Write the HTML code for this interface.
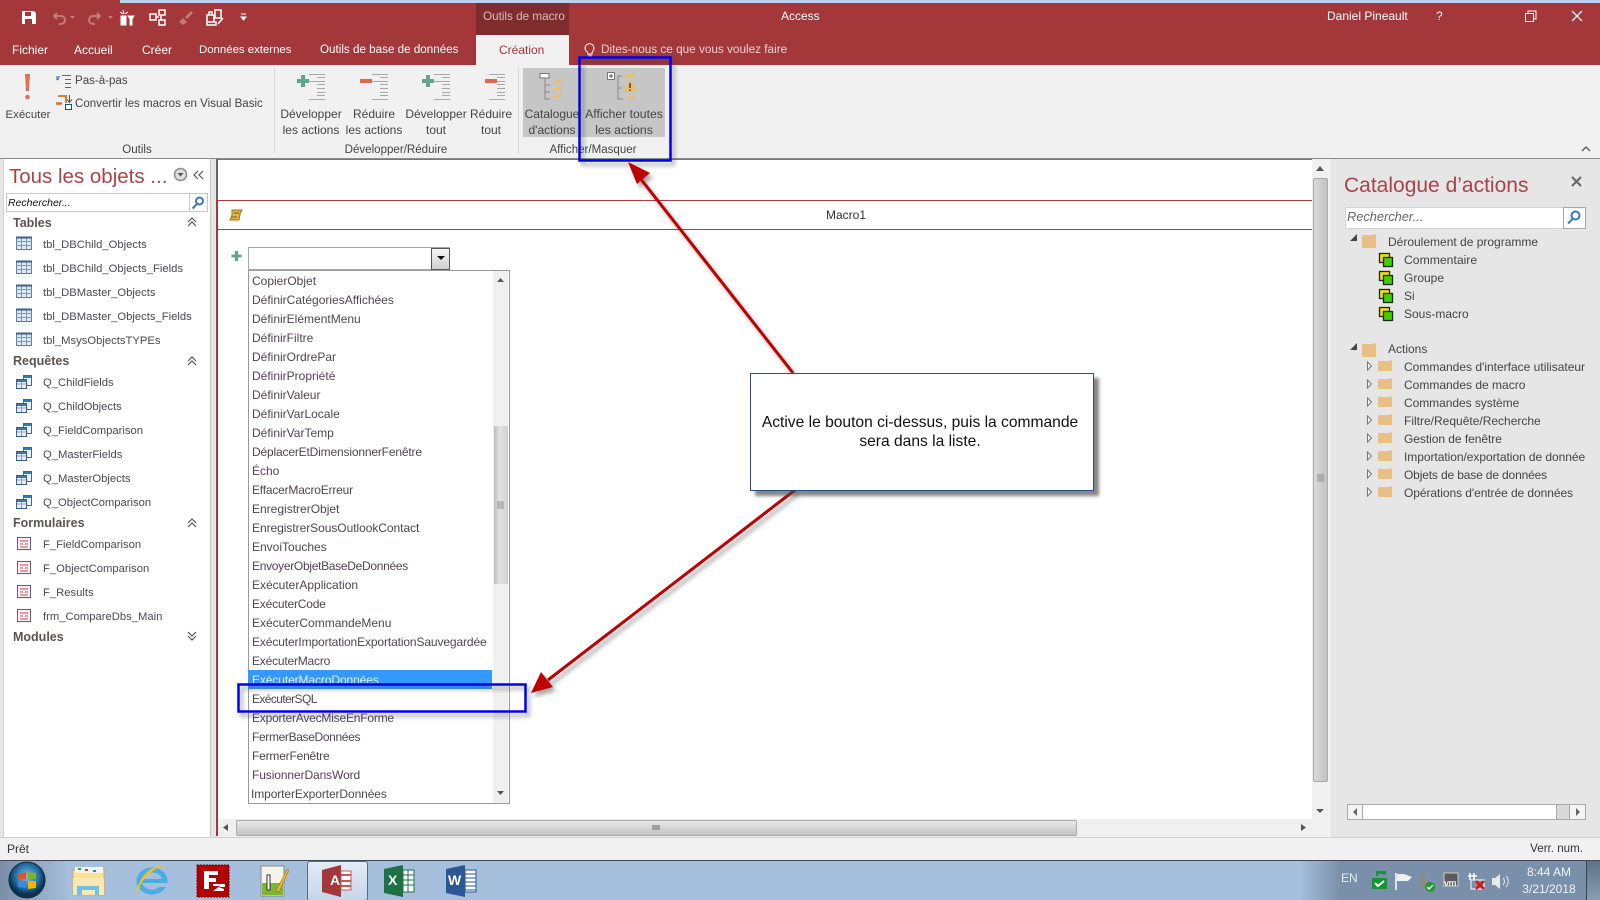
<!DOCTYPE html>
<html lang="fr"><head><meta charset="utf-8"><title>Access</title>
<style>
html,body{margin:0;padding:0;width:1600px;height:900px;overflow:hidden;background:#e6e6e6}
body{position:relative;font:12px/16px "Liberation Sans",sans-serif;color:#444}
.b{position:absolute;display:block}
.t{position:absolute;white-space:nowrap;line-height:16px;display:block}
.c{transform:translateX(-50%);text-align:center}
.w{color:#fff}
.g{font-size:11.55px;margin-top:1px}
.h{font-weight:bold;font-size:12.5px;color:#5c5452}
.n{color:#4a4a52;font-size:11.25px;margin-top:1px}
.l{left:252px;color:#4f4650}
svg{position:absolute;display:block;overflow:visible}
</style></head><body>
<!-- title bar -->
<div class="b" style="left:0;top:0;width:1600px;height:65px;background:#a4373a"></div>
<div class="b" style="left:120px;top:0;width:1480px;height:3px;background:#bcd2ea"></div>
<div class="b" style="left:476px;top:3px;width:93px;height:32px;background:#7f2c2f"></div>
<div class="b" style="left:476px;top:35px;width:93px;height:30px;background:#f1f1f1"></div>
<svg style="left:0;top:0" width="260" height="34" fill="none">
<path d="M22 11h12l2 2v11H22z" fill="#fff"/><path d="M25 12h6v4h-6zM25 19h7v5h-7z" fill="#a4373a"/>
<path d="M57 13l-3 3 3 3M54 16h7a4 4 0 0 1 0 8h-2" stroke="#c47a7c" stroke-width="2"/><path d="M70 16h5l-2.500 3z" fill="#c47a7c"/>
<path d="M97 13l3 3-3 3M100 16h-7a4 4 0 0 0 0 8h2" stroke="#c47a7c" stroke-width="2"/><path d="M108 16h5l-2.500 3z" fill="#c47a7c"/>
<path d="M121 16h5v9h-5zM128 16h6l-2 3v6h-2v-6zM123 10l1 4M120 12l3 2M128 12l-3 2" stroke="#fff" fill="#fff"/>
<path d="M150 14h6v6h-6zM159 10h6v5h-6zM159 20h6v5h-6zM156 17h3M161 15v5" stroke="#fff" stroke-width="1.500"/>
<path d="M179 22l4-4 4 4-4 3zM185 17l6-6 2 2-6 6z" fill="#c47a7c"/>
<path d="M207 15h7v7h-7zM209 15v-3h3v3M215 10h6v8h-6zM207 22h9v3h-9zM218 24l5-6" stroke="#fff" stroke-width="1.500"/>
<path d="M241 14h5M241 17h5l-2.500 3z" stroke="#fff" fill="#fff"/>
</svg>
<span class="t w" style="left:12px;top:42px">Fichier</span>
<span class="t w" style="left:74px;top:42px">Accueil</span>
<span class="t w" style="left:142px;top:42px">Créer</span>
<span class="t w" style="left:199px;top:42px;font-size:11.4px">Données externes</span>
<span class="t w" style="left:320px;top:42px;font-size:11.65px">Outils de base de données</span>
<span class="t" style="left:499px;top:42px;color:#a4373a">Création</span>
<span class="t" style="left:601px;top:42px;color:#edd3d4;font-size:11.75px">Dites-nous ce que vous voulez faire</span>
<svg style="left:583px;top:42px" width="14" height="16" fill="none" stroke="#f4e2e2" stroke-width="1.200"><path d="M3 9a4.500 4.500 0 1 1 7 0c-1 1-1 2-1 3H5c0-1 0-2-2-3zM5 14h4"/></svg>
<span class="t" style="left:483px;top:9px;color:#dcbcbd;font-size:11.7px">Outils de macro</span>
<span class="t w" style="left:781px;top:8px">Access</span>
<span class="t w" style="left:1327px;top:8px">Daniel Pineault</span>
<span class="t w" style="left:1436px;top:8px">?</span>
<svg style="left:1518px;top:8px" width="70" height="16" fill="none" stroke="#fff"><path d="M7.500 5.500h8v8h-8zM10 5V3h8v8h-2"/><path d="M54 3l10 10M64 3L54 13" stroke-width="1.300"/></svg>
<!-- ribbon -->
<div class="b" style="left:0;top:65px;width:1600px;height:93px;background:#f1f1f1"></div>
<div class="b" style="left:0;top:158px;width:1600px;height:1px;background:#8c8c8c"></div>
<div class="b" style="left:274px;top:68px;width:1px;height:85px;background:#d8d8d8"></div>
<div class="b" style="left:518px;top:68px;width:1px;height:85px;background:#d8d8d8"></div>
<div class="b" style="left:523px;top:68px;width:142px;height:69px;background:#c6c6c6"></div>
<svg style="left:0;top:65px" width="700" height="50" fill="none">
<path d="M25 9h5l-1 17h-3z" fill="#e0705a"/><circle cx="27.500" cy="32" r="2.300" fill="#e0705a"/>
<path d="M62 10.500h9M65 14.500h6M65 18.500h6M65 22.500h6" stroke="#666"/><path d="M60 12h-3v3M57 15l2-1.500" stroke="#3a78c4" stroke-width="1.300"/>
<path d="M58 31h8v7" stroke="#d9701e" stroke-width="1.800"/><path d="M56 38.500h6" stroke="#d9701e" stroke-width="2.500"/><path d="M69.500 30v7M67 34.500l2.500 3 2.500-3" stroke="#555"/><rect x="65.500" y="39.500" width="6" height="5" fill="#fff" stroke="#1f4e79"/>
<g stroke="#a8a8a8"><path d="M309 9.500h16M317 12.500h8M309 16.500h16M317 19.500h8M317 23.500h8M317 27.500h8M317 30.500h8M309 34.500h16"/><path d="M372 9.500h16M380 12.500h8M372 16.500h16M380 19.500h8M380 23.500h8M380 27.500h8M380 30.500h8M372 34.500h16"/><path d="M434 9.500h16M442 12.500h8M434 16.500h16M442 19.500h8M442 23.500h8M442 27.500h8M442 30.500h8M434 34.500h16"/><path d="M489 9.500h16M497 12.500h8M489 16.500h16M497 19.500h8M497 23.500h8M497 27.500h8M497 30.500h8M489 34.500h16"/></g>
<path d="M309 16h-12M303 10v12" stroke="#5fa78e" stroke-width="4"/><path d="M434 16h-12M428 10v12" stroke="#5fa78e" stroke-width="4"/>
<path d="M372 16h-12M497 16h-12" stroke="#de6a4b" stroke-width="4"/>
<rect x="540" y="8.500" width="9" height="4.500" fill="#fff" stroke="#777"/><path d="M545 13v21h5M545 20h5M545 27h5" stroke="#888"/>
<path d="M551 18l12-4-4 5zM551 25l12-4-4 5zM551 32l12-4-4 5z" fill="#edbe6a"/>
<rect x="607.500" y="7.500" width="7" height="7" fill="#fff" stroke="#777"/><path d="M609 11h4M611 9v4" stroke="#555"/>
<path d="M618 11h4M618 11v23h5M618 23h4" stroke="#888"/><path d="M623 12l13-5-4 5zM623 35l13-5-4 5z" fill="#edbe6a"/>
<path d="M630 14l8 13h-15z" fill="#edbe6a"/><path d="M630 18v5M630 24.500v1.500" stroke="#444" stroke-width="1.500"/>
</svg>
<span class="t c" style="left:28px;top:107px;font-size:11.4px">Exécuter</span>
<span class="t g" style="left:75px;top:72px">Pas-à-pas</span>
<span class="t g" style="left:75px;top:95px">Convertir les macros en Visual Basic</span>
<span class="t c" style="left:311px;top:106px">Développer<br>les actions</span>
<span class="t c" style="left:374px;top:106px">Réduire<br>les actions</span>
<span class="t c" style="left:436px;top:106px">Développer<br>tout</span>
<span class="t c" style="left:491px;top:106px">Réduire<br>tout</span>
<span class="t c" style="left:552px;top:106px">Catalogue<br>d'actions</span>
<span class="t c" style="left:624px;top:106px;font-size:12.2px">Afficher toutes<br>les actions</span>
<span class="t c g" style="left:137px;top:141px">Outils</span>
<span class="t c g" style="left:396px;top:141px">Développer/Réduire</span>
<span class="t c g" style="left:593px;top:141px">Afficher/Masquer</span>
<svg style="left:1580px;top:145px" width="12" height="8" fill="none" stroke="#555" stroke-width="1.300"><path d="M2 6l4-4 4 4"/></svg>
<!-- nav pane -->
<div class="b" style="left:3px;top:159px;width:206px;height:678px;background:#fff;border-right:1px solid #c6c6c6;border-left:1px solid #d4d4d4"></div>
<span class="t" style="left:9px;top:164px;font-size:20.5px;line-height:26px;color:#a8444a">Tous les objets ...</span>
<svg style="left:173px;top:167px" width="36" height="16" fill="none"><circle cx="7.500" cy="7.500" r="6" fill="#ddd" stroke="#8a8a8a" stroke-width="1.500"/><path d="M4.500 6h6l-3 3.500z" fill="#555"/><path d="M25 4l-4 4 4 4M30 4l-4 4 4 4" stroke="#555" stroke-width="1.200"/></svg>
<div class="b" style="left:6px;top:193px;width:200px;height:17px;border:1px solid #c8c8c8;background:#fff"></div>
<div class="b" style="left:189px;top:193px;width:1px;height:19px;background:#c8c8c8"></div>
<span class="t" style="left:8px;top:195px;font-style:italic;color:#111;font-size:10.5px">Rechercher...</span>
<svg style="left:191px;top:196px" width="14" height="14" fill="none" stroke="#3c78b8" stroke-width="2"><circle cx="8.500" cy="5" r="3.500"/><path d="M6 8l-4.500 4.500"/></svg>
<span class="t h" style="left:13px;top:215px">Tables</span>
<span class="t h" style="left:13px;top:353px">Requêtes</span>
<span class="t h" style="left:13px;top:515px">Formulaires</span>
<span class="t h" style="left:13px;top:629px">Modules</span>
<svg style="left:186px;top:216px" width="12" height="440" fill="none" stroke="#555" stroke-width="1.200">
<path d="M2 6l4-4 4 4M2 10l4-4 4 4"/><path d="M2 145l4-4 4 4M2 149l4-4 4 4"/><path d="M2 307l4-4 4 4M2 311l4-4 4 4"/><path d="M2 420l4 4 4-4M2 416l4 4 4-4"/>
</svg>
<span class="t n" style="left:43px;top:236px">tbl_DBChild_Objects</span>
<span class="t n" style="left:43px;top:260px">tbl_DBChild_Objects_Fields</span>
<span class="t n" style="left:43px;top:284px">tbl_DBMaster_Objects</span>
<span class="t n" style="left:43px;top:308px">tbl_DBMaster_Objects_Fields</span>
<span class="t n" style="left:43px;top:332px">tbl_MsysObjectsTYPEs</span>
<span class="t n" style="left:43px;top:374px">Q_ChildFields</span>
<span class="t n" style="left:43px;top:398px">Q_ChildObjects</span>
<span class="t n" style="left:43px;top:422px">Q_FieldComparison</span>
<span class="t n" style="left:43px;top:446px">Q_MasterFields</span>
<span class="t n" style="left:43px;top:470px">Q_MasterObjects</span>
<span class="t n" style="left:43px;top:494px">Q_ObjectComparison</span>
<span class="t n" style="left:43px;top:536px">F_FieldComparison</span>
<span class="t n" style="left:43px;top:560px">F_ObjectComparison</span>
<span class="t n" style="left:43px;top:584px">F_Results</span>
<span class="t n" style="left:43px;top:608px">frm_CompareDbs_Main</span>
<svg style="left:0;top:0" width="40" height="640" fill="none">
<g stroke="#7f9cc0"><rect x="16.500" y="237.500" width="15" height="12" fill="#dbe5f1" stroke="#5d7ea8"/><path d="M16 241.500h16M16 245.500h16M21.500 238v11M26.500 238v11"/><rect x="16.500" y="261.500" width="15" height="12" fill="#dbe5f1" stroke="#5d7ea8"/><path d="M16 265.500h16M16 269.500h16M21.500 262v11M26.500 262v11"/><rect x="16.500" y="285.500" width="15" height="12" fill="#dbe5f1" stroke="#5d7ea8"/><path d="M16 289.500h16M16 293.500h16M21.500 286v11M26.500 286v11"/><rect x="16.500" y="309.500" width="15" height="12" fill="#dbe5f1" stroke="#5d7ea8"/><path d="M16 313.500h16M16 317.500h16M21.500 310v11M26.500 310v11"/><rect x="16.500" y="333.500" width="15" height="12" fill="#dbe5f1" stroke="#5d7ea8"/><path d="M16 337.500h16M16 341.500h16M21.500 334v11M26.500 334v11"/></g>
<path d="M16 237.500h16M16 261.500h16M16 285.500h16M16 309.500h16M16 333.500h16" stroke="#3f5f8f" stroke-width="2"/>
<g stroke="#2f6f8f" fill="#e6f0f6"><path d="M23.500 375.500h8v10h-8z"/><path d="M16.500 379.500h10v9h-10z" stroke="#3b5f85"/><path d="M23.500 399.500h8v10h-8z"/><path d="M16.500 403.500h10v9h-10z" stroke="#3b5f85"/><path d="M23.500 423.500h8v10h-8z"/><path d="M16.500 427.500h10v9h-10z" stroke="#3b5f85"/><path d="M23.500 447.500h8v10h-8z"/><path d="M16.500 451.500h10v9h-10z" stroke="#3b5f85"/><path d="M23.500 471.500h8v10h-8z"/><path d="M16.500 475.500h10v9h-10z" stroke="#3b5f85"/><path d="M23.500 495.500h8v10h-8z"/><path d="M16.500 499.500h10v9h-10z" stroke="#3b5f85"/></g>
<path d="M24 377h7M17 381h9M24 401h7M17 405h9M24 425h7M17 429h9M24 449h7M17 453h9M24 473h7M17 477h9M24 497h7M17 501h9" stroke="#2f7f9f" stroke-width="2"/>
<path d="M17 384h9M21.500 382v6M17 408h9M21.500 406v6M17 432h9M21.500 430v6M17 456h9M21.500 454v6M17 480h9M21.500 478v6M17 504h9M21.500 502v6" stroke="#8aa4c0"/>
<g fill="#fdf3f3" stroke="#8a4a6a"><rect x="17.500" y="537.500" width="13" height="12"/><rect x="17.500" y="561.500" width="13" height="12"/><rect x="17.500" y="585.500" width="13" height="12"/><rect x="17.500" y="609.500" width="13" height="12"/></g>
<g stroke="#c04a5a"><path d="M20 541h8M20 544h3M25 544h3M20 547h8M20 565h8M20 568h3M25 568h3M20 571h8M20 589h8M20 592h3M25 592h3M20 595h8M20 613h8M20 616h3M25 616h3M20 619h8"/></g>
</svg>
<!-- document area -->
<div class="b" style="left:216px;top:159px;width:2px;height:677px;background:#a4373a"></div>
<div class="b" style="left:216px;top:159px;width:2px;height:41px;background:#666"></div>
<div class="b" style="left:218px;top:159px;width:1094px;height:677px;background:#fff"></div>
<div class="b" style="left:218px;top:159px;width:1112px;height:1px;background:#777"></div>
<div class="b" style="left:218px;top:200px;width:1094px;height:1px;background:#b03c40"></div>
<div class="b" style="left:218px;top:229px;width:1094px;height:1px;background:#b03c40"></div>
<span class="t c" style="left:846px;top:207px;color:#333">Macro1</span>
<svg style="left:229px;top:209px" width="14" height="13"><path d="M3 1h10l-2 4-1 6H1l2-5z" fill="#e2b23e" stroke="#9a7420"/><path d="M5 4h5M3 8h5" stroke="#7a5a10"/></svg>
<svg style="left:231px;top:251px" width="11" height="11"><path d="M5.500 0v10M.5 5h10" stroke="#5fa78e" stroke-width="3"/></svg>
<!-- combo -->
<div class="b" style="left:248px;top:247px;width:200px;height:21px;border:1px solid #aaa;background:#fff"></div>
<div class="b" style="left:431px;top:248px;width:17px;height:20px;border:1px solid #555;background:linear-gradient(#f6f6f6,#cfcfcf)"></div>
<svg style="left:437px;top:256px" width="8" height="5"><path d="M0 0h8L4 4z" fill="#111"/></svg>
<div class="b" style="left:248px;top:270px;width:260px;height:532px;border:1px solid #9a9a9a;background:#fff"></div>
<div class="b" style="left:493px;top:271px;width:15px;height:532px;background:#f0f0f0"></div>
<div class="b" style="left:494px;top:426px;width:14px;height:158px;background:linear-gradient(90deg,#bcbcbc,#e4e4e4 40%,#cfcfcf);border-radius:1px"></div>
<svg style="left:497px;top:278px" width="8" height="522"><path d="M0 4h7L3.500 0zM0 513h7l-3.500 4z" fill="#555"/><path d="M0 224h7M0 226h7M0 228h7M0 230h7" stroke="#777" stroke-width=".7"/></svg>
<span class="t l" style="top:273px">CopierObjet</span>
<span class="t l" style="top:292px">DéfinirCatégoriesAffichées</span>
<span class="t l" style="top:311px">DéfinirElémentMenu</span>
<span class="t l" style="top:330px">DéfinirFiltre</span>
<span class="t l" style="top:349px">DéfinirOrdrePar</span>
<span class="t l" style="top:368px">DéfinirPropriété</span>
<span class="t l" style="top:387px">DéfinirValeur</span>
<span class="t l" style="top:406px">DéfinirVarLocale</span>
<span class="t l" style="top:425px">DéfinirVarTemp</span>
<span class="t l" style="top:444px;letter-spacing:-.17px">DéplacerEtDimensionnerFenêtre</span>
<span class="t l" style="top:463px">Écho</span>
<span class="t l" style="top:482px;letter-spacing:-.2px">EffacerMacroErreur</span>
<span class="t l" style="top:501px">EnregistrerObjet</span>
<span class="t l" style="top:520px;letter-spacing:-.05px">EnregistrerSousOutlookContact</span>
<span class="t l" style="top:539px">EnvoiTouches</span>
<span class="t l" style="top:558px;letter-spacing:-.3px">EnvoyerObjetBaseDeDonnées</span>
<span class="t l" style="top:577px">ExécuterApplication</span>
<span class="t l" style="top:596px;letter-spacing:-.2px">ExécuterCode</span>
<span class="t l" style="top:615px">ExécuterCommandeMenu</span>
<span class="t l" style="top:634px;letter-spacing:-.12px">ExécuterImportationExportationSauvegardée</span>
<span class="t l" style="top:653px;letter-spacing:-.2px">ExécuterMacro</span>
<div class="b" style="left:248px;top:670px;width:244px;height:19px;background:#3399ff"></div>
<span class="t" style="left:252px;top:672px;height:11px;overflow:hidden;color:#e6f0ff;letter-spacing:-.1px">ExécuterMacroDonnées</span>
<span class="t l" style="top:691px;letter-spacing:-.6px">ExécuterSQL</span>
<span class="t l" style="top:710px;letter-spacing:-.2px">ExporterAvecMiseEnForme</span>
<span class="t l" style="top:729px;letter-spacing:-.35px">FermerBaseDonnées</span>
<span class="t l" style="top:748px;letter-spacing:-.2px">FermerFenêtre</span>
<span class="t l" style="top:767px;letter-spacing:-.1px">FusionnerDansWord</span>
<span class="t" style="left:251px;top:786px;color:#4f4650;letter-spacing:-.1px">ImporterExporterDonnées</span>
<!-- main scrollbars -->
<div class="b" style="left:218px;top:819px;width:1111px;height:18px;background:#f0f0f0"></div>
<div class="b" style="left:236px;top:820px;width:839px;height:14px;background:linear-gradient(#e8e8e8,#c4c4c4);border:1px solid #aaa;border-radius:2px"></div>
<svg style="left:222px;top:823px" width="1086" height="10"><path d="M6 1v7L1 4.500zM1079 1v7l5-3.500z" fill="#555"/><path d="M431 2v5M433 2v5M435 2v5M437 2v5" stroke="#666"/></svg>
<div class="b" style="left:1312px;top:159px;width:17px;height:660px;background:#f0f0f0"></div>
<div class="b" style="left:1313px;top:178px;width:13px;height:602px;background:linear-gradient(90deg,#dadada,#c2c2c2);border:1px solid #aaa;border-radius:2px"></div>
<svg style="left:1315px;top:166px" width="12" height="650"><path d="M1 5h8L5 0zM1 643h8l-4 4z" fill="#555"/><path d="M2 309h7M2 311h7M2 313h7M2 315h7" stroke="#777" stroke-width=".7"/></svg>
<div class="b" style="left:1329px;top:159px;width:1px;height:678px;background:#fafafa"></div>
<!-- annotations -->
<svg style="left:0;top:0;filter:drop-shadow(3px 4px 2px rgba(60,60,60,.45))" width="1600" height="900" fill="none">
<path d="M793 373L640 178" stroke="#c00000" stroke-width="3"/><path d="M628 162l22 11-13 11z" fill="#c00000"/>
<path d="M795 490L548 680" stroke="#c00000" stroke-width="3"/><path d="M531 693l10-21 12 15z" fill="#c00000"/>
<rect x="579.500" y="57.500" width="91" height="103" stroke="#0000f0" stroke-width="2.500"/>
<rect x="238.500" y="684.500" width="287" height="27" stroke="#0000f0" stroke-width="2.500"/>
</svg>
<div class="b" style="left:750px;top:373px;width:342px;height:116px;background:#fff;border:1px solid #24508f;box-shadow:5px 5px 3px rgba(70,70,70,.65)"></div>
<span class="t c" style="left:920px;top:413px;color:#111;font-size:15.6px;line-height:19px">Active le bouton ci-dessus, puis la commande<br>sera dans la liste.</span>
<!-- action catalog -->
<span class="t" style="left:1344px;top:173px;font-size:21px;line-height:26px;color:#a8444a">Catalogue d’actions</span>
<svg style="left:1571px;top:176px" width="11" height="11"><path d="M1 1l9 9M10 1L1 10" stroke="#666" stroke-width="2"/></svg>
<div class="b" style="left:1345px;top:207px;width:238px;height:20px;background:#fff;border:1px solid #d0d4dc"></div>
<div class="b" style="left:1563px;top:207px;width:21px;height:20px;background:#fff;border:1px solid #a8a8a8"></div>
<svg style="left:1566px;top:210px" width="16" height="15" fill="none" stroke="#3c78b8" stroke-width="2"><circle cx="9.500" cy="5.500" r="4"/><path d="M6.500 9l-4.500 4.500"/></svg>
<span class="t" style="left:1347px;top:209px;font-style:italic;color:#666;font-size:12.800px">Rechercher...</span>
<svg style="left:1345px;top:230px" width="60" height="280">
<g fill="#444"><path d="M5 11h7V4zM5 120h7v-7z"/></g>
<g fill="#e9c084"><path d="M17 5h11l3-1v14H17zM17 114h11l3-1v14H17z"/><path d="M33 131h11l3-1v11H33zM33 149h11l3-1v11H33zM33 167h11l3-1v11H33zM33 185h11l3-1v11H33zM33 203h11l3-1v11H33zM33 221h11l3-1v11H33zM33 239h11l3-1v11H33zM33 257h11l3-1v11H33z"/></g>
<g fill="#fff" stroke="#777"><path d="M22.500 132l4 4-4 4zM22.500 150l4 4-4 4zM22.500 168l4 4-4 4zM22.500 186l4 4-4 4zM22.500 204l4 4-4 4zM22.500 222l4 4-4 4zM22.500 240l4 4-4 4zM22.500 258l4 4-4 4z"/></g>
<g stroke="#222" stroke-width="1.300"><rect x="34.500" y="23.500" width="10" height="9" fill="#f0e000"/><rect x="38.500" y="27.500" width="9" height="9" fill="#40d000"/><rect x="34.500" y="41.500" width="10" height="9" fill="#f0e000"/><rect x="38.500" y="45.500" width="9" height="9" fill="#40d000"/><rect x="34.500" y="59.500" width="10" height="9" fill="#f0e000"/><rect x="38.500" y="63.500" width="9" height="9" fill="#40d000"/><rect x="34.500" y="77.500" width="10" height="9" fill="#f0e000"/><rect x="38.500" y="81.500" width="9" height="9" fill="#40d000"/></g>
</svg>
<span class="t" style="left:1388px;top:234px">Déroulement de programme</span>
<span class="t" style="left:1404px;top:252px;font-size:12.2px">Commentaire</span>
<span class="t" style="left:1404px;top:270px">Groupe</span>
<span class="t" style="left:1404px;top:288px">Si</span>
<span class="t" style="left:1404px;top:306px">Sous-macro</span>
<span class="t" style="left:1388px;top:341px">Actions</span>
<span class="t" style="left:1404px;top:359px;width:181px;overflow:hidden">Commandes d'interface utilisateur</span>
<span class="t" style="left:1404px;top:377px">Commandes de macro</span>
<span class="t" style="left:1404px;top:395px;letter-spacing:-.05px">Commandes système</span>
<span class="t" style="left:1404px;top:413px">Filtre/Requête/Recherche</span>
<span class="t" style="left:1404px;top:431px;letter-spacing:-.05px">Gestion de fenêtre</span>
<span class="t" style="left:1404px;top:449px;width:181px;overflow:hidden;letter-spacing:-.05px">Importation/exportation de données</span>
<span class="t" style="left:1404px;top:467px;letter-spacing:-.15px">Objets de base de données</span>
<span class="t" style="left:1404px;top:485px;letter-spacing:-.07px">Opérations d'entrée de données</span>
<div class="b" style="left:1347px;top:804px;width:237px;height:14px;border:1px solid #aaa;background:#d8d8d8"></div>
<div class="b" style="left:1362px;top:804px;width:193px;height:14px;border:1px solid #aaa;background:#fff"></div>
<div class="b" style="left:1569px;top:804px;width:15px;height:14px;border:1px solid #aaa;background:#f4f4f4"></div>
<div class="b" style="left:1348px;top:805px;width:14px;height:14px;background:#f4f4f4"></div>
<svg style="left:1351px;top:807px" width="232" height="10"><path d="M6 1v8L2 5zM225 1v8l4-4z" fill="#666"/></svg>
<!-- status bar -->
<div class="b" style="left:0;top:837px;width:1600px;height:1px;background:#d0d0d0"></div>
<div class="b" style="left:0;top:838px;width:1600px;height:22px;background:#f1f1f1"></div>
<div class="b" style="left:0;top:860px;width:1600px;height:1px;background:#3c4a5a"></div>
<span class="t" style="left:7px;top:841px;color:#333">Prêt</span>
<span class="t" style="right:17px;top:841px;color:#333;font-size:11.6px">Verr. num.</span>
<!-- taskbar -->
<div class="b" style="left:0;top:861px;width:1600px;height:39px;background:linear-gradient(90deg,#7a8ea8,#a6bfdc 70px,#a6bfdc 1300px,#7a90aa 1340px,#7a90aa)"></div>
<div class="b" style="left:307px;top:861px;width:59px;height:38px;background:linear-gradient(#e4ecf5,#c6d6e8);border:1px solid #5a6a7a;border-radius:3px"></div>
<div class="b" style="left:1586px;top:861px;width:14px;height:39px;background:linear-gradient(#5f7287,#8a9cb0);border-left:1px solid #35465a"></div>
<svg style="left:0;top:861px" width="500" height="39">
<defs><radialGradient id="o" cx=".5" cy=".4"><stop offset="0" stop-color="#7cc0e8"/><stop offset=".7" stop-color="#1f6a9e"/><stop offset="1" stop-color="#0c3150"/></radialGradient></defs>
<circle cx="27" cy="19" r="18" fill="url(#o)" stroke="#1a2a3a"/>
<path d="M18 13l8-2v7h-8z" fill="#e2532d"/><path d="M28 11l8 1v6h-8z" fill="#7ab51d"/><path d="M18 20h8v7l-8-1z" fill="#3a8ad8"/><path d="M28 20h8v7l-8 1z" fill="#f7b500"/>
<path d="M73 9h31v25H73z" fill="#f7e29a" stroke="#d0ad60"/><path d="M75 6h28v6H75z" fill="#f3f3e8"/><path d="M78 7h3v2h-3z" fill="#1ea93c"/><path d="M85 8h3v2h-3z" fill="#d8402c"/><path d="M93 9h3v2h-3z" fill="#2c88d8"/><path d="M73 17h31v17H73z" fill="#f9e8b2"/><path d="M77 34v-9h22v9h-4v-5H82v5z" fill="#6cc0ec"/>
<ellipse cx="152" cy="20" rx="13" ry="11" fill="none" stroke="#49ace4" stroke-width="5"/><path d="M142 20h21" stroke="#49ace4" stroke-width="4"/><path d="M138 32C140 18 154 6 166 5c-4-2-14 1-20 7s-11 17-8 20z" fill="#f3c21c"/><rect x="155" y="22" width="12" height="4" fill="#a6bfdc"/>
<rect x="197" y="4" width="32" height="32" fill="#b30000" stroke="#7a0000" stroke-dasharray="2 1"/>
<path d="M204 10h14v4h-9v3h7v4h-7v7h-5zM213 23h12v3h-7l6 2v2h-11l7-5h-7z" fill="#fff"/>
<rect x="261" y="5" width="23" height="30" fill="#f4f4ea" stroke="#8a8a8a"/><rect x="262" y="22" width="21" height="12" fill="#7ab82c"/><path d="M267 14h3v15h-3z" fill="#fff" stroke="#333"/><path d="M276 30l11-22 2 1-10 22z" fill="#eeb52a" stroke="#8a6a14" stroke-width=".5"/>
<path d="M322 9l19-5v32l-19-5z" fill="#a4373a"/><path d="M341 10h10v19h-10z" fill="#fff" stroke="#c8565a"/><path d="M341 14h10M341 20h10M341 25h10" stroke="#c8565a" stroke-width="2"/>
<path d="M384 8l19-4v32l-19-4z" fill="#1e7145"/><path d="M403 9h11v22h-11z" fill="#fff" stroke="#1e7145"/><path d="M403 14h11M403 19h11M403 24h11M408 9v22" stroke="#1e7145"/>
<path d="M446 8l19-4v32l-19-4z" fill="#2b5797"/><path d="M465 9h11v22h-11z" fill="#fff" stroke="#2b5797"/><path d="M465 13h11M465 17h11M465 21h11M465 25h11M465 29h11" stroke="#2b5797"/>
</svg>
<span class="t" style="left:330px;top:872px;color:#fff;font-weight:bold;font-size:14px">A</span>
<span class="t" style="left:388px;top:872px;color:#fff;font-weight:bold;font-size:14px">X</span>
<span class="t" style="left:448px;top:872px;color:#fff;font-weight:bold;font-size:14px">W</span>
<span class="t" style="left:1341px;top:870px;color:#e8eef5">EN</span>
<svg style="left:1370px;top:868px" width="140" height="24">
<path d="M2 10h15v11H2z" fill="#0d9a2a"/><path d="M7 8V4h9M7 5c3-2 6 2 9 0" stroke="#0d9a2a" stroke-width="2" fill="none"/><path d="M5 15l3 3 6-5" stroke="#fff" stroke-width="2" fill="none"/>
<path d="M26 5v17" stroke="#fff" stroke-width="1.500"/><path d="M27 6h7l8 3-4 4h-11z" fill="#f0f0f0"/>
<path d="M50 5h5v6h3v9h-9v-9h1z" fill="#8a8a8a"/><circle cx="60" cy="19" r="5" fill="#1d9a2a"/><path d="M57 19l2 2 4-4" stroke="#fff" stroke-width="1.500" fill="none"/>
<rect x="74" y="5" width="14" height="13" fill="#5a5a5a" stroke="#ccc"/>
<path d="M100 5v7M104 5v7M98 8h9" stroke="#fff" stroke-width="1.500"/><rect x="101" y="12" width="13" height="9" fill="none" stroke="#fff"/><path d="M106 13l8 8M114 13l-8 8" stroke="#e01010" stroke-width="2.500"/>
<path d="M122 10h3l5-4v15l-5-4h-3z" fill="#e8e8e8"/><path d="M133 10a5 5 0 0 1 0 7M136 8a8 8 0 0 1 0 11" stroke="#e8e8e8" fill="none"/>
</svg>
<span class="t" style="left:1444px;top:875px;color:#eee;font-size:9px;font-weight:bold;letter-spacing:-.5px">vm</span>
<span class="t c" style="left:1549px;top:864px;color:#f0f4f8">8:44 AM</span>
<span class="t c" style="left:1549px;top:881px;color:#f0f4f8">3/21/2018</span>
</body></html>
